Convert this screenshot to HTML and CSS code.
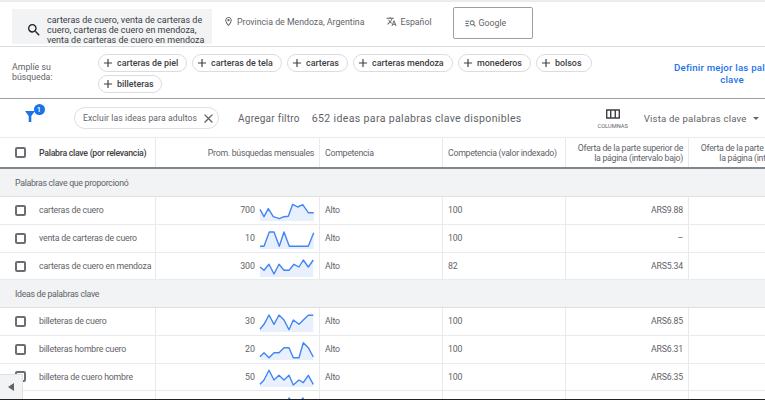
FILE: index.html
```html
<!DOCTYPE html>
<html lang="es">
<head>
<meta charset="utf-8">
<title>Ideas para palabras clave</title>
<link rel="stylesheet" href="styles.css">
</head>
<body>
<div class="page">
  <header class="topbar">
    <div class="search">
      <svg class="ic-search" viewBox="0 0 24 24"><path d="M15.5 14h-.79l-.28-.27A6.471 6.471 0 0 0 16 9.5 6.5 6.5 0 1 0 9.5 16c1.61 0 3.09-.59 4.23-1.57l.27.28v.79l5 4.99L20.49 19l-4.99-5zm-6 0C7.01 14 5 11.99 5 9.5S7.01 5 9.5 5 14 7.01 14 9.5 11.99 14 9.5 14z"/></svg>
      <div class="search-text">carteras de cuero, venta de carteras de cuero, carteras de cuero en mendoza, venta de carteras de cuero en mendoza</div>
    </div>
    <div class="loc">
      <svg class="ic-sm" viewBox="0 0 24 24"><path d="M12 2C8.13 2 5 5.13 5 9c0 5.25 7 13 7 13s7-7.75 7-13c0-3.87-3.13-7-7-7zM7 9c0-2.76 2.24-5 5-5s5 2.24 5 5c0 2.88-2.88 7.19-5 9.88C9.92 16.21 7 11.85 7 9z"/><circle cx="12" cy="9" r="2.5"/></svg>
      <span>Provincia de Mendoza, Argentina</span>
    </div>
    <div class="lang">
      <svg class="ic-sm" viewBox="0 0 24 24"><path d="M12.87 15.07l-2.54-2.51.03-.03c1.74-1.94 2.98-4.17 3.71-6.53H17V4h-7V2H8v2H1v1.99h11.17C11.5 7.92 10.44 9.75 9 11.35 8.07 10.32 7.3 9.19 6.69 8h-2c.73 1.63 1.73 3.17 2.98 4.56l-5.09 5.02L4 19l5-5 3.11 3.11.76-2.04zM18.5 10h-2L12 22h2l1.12-3h4.75L21 22h2l-4.5-12zm-2.62 7l1.62-4.33L19.12 17h-3.24z"/></svg>
      <span>Español</span>
    </div>
    <div class="network">
      <svg class="ic-net" viewBox="0 0 24 24"><path d="M1 6h8v2H1zM1 11h6v2H1zM1 16h8v2H1z"/><path d="M15.5 5a5.5 5.5 0 0 1 4.3 8.9l3.7 3.7-1.4 1.4-3.7-3.7A5.5 5.5 0 1 1 15.5 5zm0 2a3.5 3.5 0 1 0 0 7 3.500 3.500 0 0 0 0-7z"/></svg>
      <span>Google</span>
    </div>
  </header>

  <section class="refine">
    <div class="refine-label">Amplíe su<br>búsqueda:</div>
    <div class="chips">
      <div class="chip w1"><svg class="ic-plus" viewBox="0 0 24 24"><path d="M19 13h-6v6h-2v-6H5v-2h6V5h2v6h6v2z"/></svg>carteras de piel</div>
      <div class="chip w2"><svg class="ic-plus" viewBox="0 0 24 24"><path d="M19 13h-6v6h-2v-6H5v-2h6V5h2v6h6v2z"/></svg>carteras de tela</div>
      <div class="chip w3"><svg class="ic-plus" viewBox="0 0 24 24"><path d="M19 13h-6v6h-2v-6H5v-2h6V5h2v6h6v2z"/></svg>carteras</div>
      <div class="chip w4"><svg class="ic-plus" viewBox="0 0 24 24"><path d="M19 13h-6v6h-2v-6H5v-2h6V5h2v6h6v2z"/></svg>carteras mendoza</div>
      <div class="chip w5"><svg class="ic-plus" viewBox="0 0 24 24"><path d="M19 13h-6v6h-2v-6H5v-2h6V5h2v6h6v2z"/></svg>monederos</div>
      <div class="chip w6"><svg class="ic-plus" viewBox="0 0 24 24"><path d="M19 13h-6v6h-2v-6H5v-2h6V5h2v6h6v2z"/></svg>bolsos</div>
      <div class="chip w7"><svg class="ic-plus" viewBox="0 0 24 24"><path d="M19 13h-6v6h-2v-6H5v-2h6V5h2v6h6v2z"/></svg>billeteras</div>
    </div>
    <div class="refine-link">Definir mejor las palabras clave</div>
  </section>

  <section class="filters">
    <div class="funnel">
      <svg class="ic-funnel" viewBox="0 0 10 11"><path d="M0 0h10L6.300 5V11H3.700V5z"/></svg>
      <span class="badge">1</span>
    </div>
    <div class="filter-chip">
      <span>Excluir las ideas para adultos</span>
      <svg class="ic-close" viewBox="0 0 24 24"><path d="M19 6.410L17.590 5 12 10.590 6.410 5 5 6.410 10.590 12 5 17.590 6.410 19 12 13.410 17.590 19 19 17.590 13.410 12z"/></svg>
    </div>
    <div class="add-filter">Agregar filtro</div>
    <div class="count">652 ideas para palabras clave disponibles</div>
    <div class="columns">
      <svg class="ic-columns" viewBox="0 0 15 10"><path d="M0 0h15v10H0zM1.500 1.500v7h2.800v-7zm4.300 0v7h3.400v-7zm4.900 0v7h2.800v-7z" fill-rule="evenodd"/></svg>
      <span>COLUMNAS</span>
    </div>
    <div class="view">Vista de palabras clave<span class="caret"></span></div>
  </section>

  <main class="table">
    <div class="row head">
      <div class="cell kw"><span class="box"></span><strong>Palabra clave (por relevancia)</strong></div>
      <div class="cell num">Prom. búsquedas mensuales</div>
      <div class="cell">Competencia</div>
      <div class="cell">Competencia (valor indexado)</div>
      <div class="cell right">Oferta de la parte superior de<br>la página (intervalo bajo)</div>
      <div class="cell right">Oferta de la parte superior de<br>la página (intervalo alto)</div>
    </div>

    <div class="group">Palabras clave que proporcionó</div>

    <div class="row">
      <div class="cell kw"><span class="box"></span>carteras de cuero</div>
      <div class="cell vol"><span>700</span><svg class="spark" viewBox="0 0 54 21"><path class="area" d="M0 9.300L4 16.700 8.300 8.700 13.300 16.700 19.300 18.700 24 16.700 28.300 16.300 32.700 4.300 37.700 7 42.700 4.700 48.300 12.700 53.700 12.700V21H0z"/><path class="line" d="M0 9.300L4 16.700 8.300 8.700 13.300 16.700 19.300 18.700 24 16.700 28.300 16.300 32.700 4.300 37.700 7 42.700 4.700 48.300 12.700 53.700 12.700"/></svg></div>
      <div class="cell">Alto</div><div class="cell">100</div><div class="cell right">ARS9.88</div><div class="cell"></div>
    </div>
    <div class="row">
      <div class="cell kw"><span class="box"></span>venta de carteras de cuero</div>
      <div class="cell vol"><span>10</span><svg class="spark" viewBox="0 0 54 21"><path class="area" d="M0 18.300H4L9.300 4H14L19.300 18.300 24 4 29.300 18.300H48.300L53.700 4.700V21H0z"/><path class="line" d="M0 18.300H4L9.300 4H14L19.300 18.300 24 4 29.300 18.300H48.300L53.700 4.700"/></svg></div>
      <div class="cell">Alto</div><div class="cell">100</div><div class="cell right">–</div><div class="cell"></div>
    </div>
    <div class="row">
      <div class="cell kw"><span class="box"></span>carteras de cuero en mendoza</div>
      <div class="cell vol"><span>300</span><svg class="spark" viewBox="0 0 54 21"><path class="area" d="M0 11L4 14.300 9 8.300 14 18 19 8.300 24 14.300 29 14.300 34 8.300 39 11 43.300 4 48.300 11 53.300 4V21H0z"/><path class="line" d="M0 11L4 14.300 9 8.300 14 18 19 8.300 24 14.300 29 14.300 34 8.300 39 11 43.300 4 48.300 11 53.300 4"/></svg></div>
      <div class="cell">Alto</div><div class="cell">82</div><div class="cell right">ARS5.34</div><div class="cell"></div>
    </div>

    <div class="group">Ideas de palabras clave</div>

    <div class="row">
      <div class="cell kw"><span class="box"></span>billeteras de cuero</div>
      <div class="cell vol"><span>30</span><svg class="spark" viewBox="0 0 54 21"><path class="area" d="M0 18.300L4 13.300 9 4 14 13.300 19 4 24 9 29 18.700 33.300 9 39 13.300 43.300 9 48.300 4.300 53.300 4.300V21H0z"/><path class="line" d="M0 18.300L4 13.300 9 4 14 13.300 19 4 24 9 29 18.700 33.300 9 39 13.300 43.300 9 48.300 4.300 53.300 4.300"/></svg></div>
      <div class="cell">Alto</div><div class="cell">100</div><div class="cell right">ARS6.85</div><div class="cell"></div>
    </div>
    <div class="row">
      <div class="cell kw"><span class="box"></span>billeteras hombre cuero</div>
      <div class="cell vol"><span>20</span><svg class="spark" viewBox="0 0 54 21"><path class="area" d="M0 17.700L4 13.700 9 18.700 14 13.700 19 13.700 24 8.700 29 8.700 33.300 18.700 39 18.700 43.300 3.700 48.300 8.700 53.300 18V21H0z"/><path class="line" d="M0 17.700L4 13.700 9 18.700 14 13.700 19 13.700 24 8.700 29 8.700 33.300 18.700 39 18.700 43.300 3.700 48.300 8.700 53.300 18"/></svg></div>
      <div class="cell">Alto</div><div class="cell">100</div><div class="cell right">ARS6.31</div><div class="cell"></div>
    </div>
    <div class="row">
      <div class="cell kw"><span class="box"></span>billetera de cuero hombre</div>
      <div class="cell vol"><span>50</span><svg class="spark" viewBox="0 0 54 21"><path class="area" d="M0 18.300L4 14 9 4.300 14 14 19 9.300 24 14 29 9.300 33.300 19 39 14 43.300 16.700 48.300 9.300 53.300 18.300V21H0z"/><path class="line" d="M0 18.300L4 14 9 4.300 14 14 19 9.300 24 14 29 9.300 33.300 19 39 14 43.300 16.700 48.300 9.300 53.300 18.300"/></svg></div>
      <div class="cell">Alto</div><div class="cell">100</div><div class="cell right">ARS6.35</div><div class="cell"></div>
    </div>
    <div class="row">
      <div class="cell kw"></div>
      <div class="cell vol"><span></span><svg class="spark" viewBox="0 0 54 21"><path class="line" d="M25 12L29 4 33 9 39 9 43 4 47 12"/></svg></div>
      <div class="cell"></div><div class="cell"></div><div class="cell"></div><div class="cell"></div>
    </div>
  </main>
  <div class="pager"><span class="pager-arrow"></span></div>
</div>
</body>
</html>
```
FILE: styles.css
```css
* { box-sizing: border-box; }
html, body { margin: 0; padding: 0; }
body { width: 765px; height: 400px; overflow: hidden; background: #fff; font-family: Roboto, "Liberation Sans", sans-serif; color: #5f6368; }
svg { display: block; flex: none; fill: currentColor; }
.page { position: relative; width: 765px; height: 400px; overflow: hidden; border-top: 2px solid #ececec; border-bottom: 1px solid #222; }

.topbar { display: flex; align-items: flex-start; height: 45px; border-bottom: 1px solid #dadce0; font-size: 8.75px; }
.search { display: flex; align-items: center; flex: none; width: 200px; height: 35px; margin: 7px 0 0 12px; background: #f1f3f4; overflow: hidden; }
.ic-search { width: 16px; height: 16px; margin: 6px 5px 0 14px; color: #202124; }
.search-text { flex: none; width: 160px; padding-top: 6px; font-size: 9px; line-height: 10px; color: #3c4043; }
.loc { display: flex; align-items: center; flex: none; gap: 3px; margin: 14px 0 0 11px; }
.lang { display: flex; align-items: center; flex: none; gap: 3px; margin: 14px 0 0 22px; }
.ic-sm { width: 11px; height: 11px; }
.network { display: flex; align-items: center; flex: none; gap: 3px; width: 80px; height: 32px; margin: 5px 0 0 21px; padding-left: 11px; border: 1px solid #9aa0a6; border-radius: 2px; }
.ic-net { width: 11px; height: 11px; }

.refine { display: flex; height: 52px; border-bottom: 1px solid #9aa0a6; }
.refine-label { flex: none; width: 86px; margin: 15px 0 0 12px; font-size: 8.75px; line-height: 10px; color: #5f6368; }
.chips { display: flex; flex-wrap: wrap; align-content: flex-start; gap: 3px 5px; flex: none; width: 500px; padding-top: 7px; }
.chip { display: flex; align-items: center; height: 18px; padding-left: 2px; border: 1px solid #dadce0; border-radius: 9px; font-size: 8.9px; font-weight: 500; color: #3c4043; white-space: nowrap; }
.ic-plus { width: 14px; height: 14px; margin-right: 2px; color: #3c4043; }
.w1 { width: 89px; } .w2 { width: 90px; } .w3 { width: 61px; } .w4 { width: 100px; } .w5 { width: 73px; } .w6 { width: 56px; } .w7 { width: 64px; }
.refine-link { flex: none; width: 124px; margin: 15px 0 0 72px; font-size: 9.7px; font-weight: 500; line-height: 12px; letter-spacing: .2px; text-align: center; color: #1a73e8; }

.filters { display: flex; align-items: center; height: 38px; }
.funnel { position: relative; flex: none; width: 10px; margin: 0 0 3px 25px; color: #1a73e8; }
.ic-funnel { width: 10px; height: 11px; }
.badge { position: absolute; left: 8.500px; top: -7.500px; width: 11px; height: 11px; border-radius: 50%; background: #1a73e8; color: #fff; font-size: 7.500px; line-height: 11px; text-align: center; font-weight: 500; }
.filter-chip { display: flex; align-items: center; justify-content: space-between; flex: none; width: 145px; height: 22px; margin-left: 39px; padding: 0 2.500px 0 8px; border: 1px solid #e0e0e0; border-radius: 11px; font-size: 8.600px; letter-spacing: .1px; white-space: nowrap; }
.ic-close { width: 15px; height: 15px; }
.add-filter { flex: none; margin-left: 19px; font-size: 10px; letter-spacing: .25px; white-space: nowrap; }
.count { flex: none; margin-left: 12px; font-size: 10.550px; letter-spacing: .35px; white-space: nowrap; }
.columns { display: flex; flex-direction: column; align-items: center; flex: none; width: 40px; margin: 2px 0 0 71px; font-size: 5.700px; gap: 4px; }
.ic-columns { width: 14px; height: 10px; color: #3c4043; }
.view { display: flex; align-items: center; flex: none; margin-left: 11px; font-size: 9.600px; letter-spacing: .2px; white-space: nowrap; }
.caret { width: 0; height: 0; margin-left: 6px; border: 3.500px solid transparent; border-top-color: #5f6368; border-bottom: 0; }

.table { width: 811px; border-top: 1px solid #e8eaed; }
.row { display: grid; grid-template-columns: 156px 164px 123px 123px 123px 122px; height: 28px; border-bottom: 1px solid #e8eaed; font-size: 8.750px; letter-spacing: -.2px; }
.row:nth-child(5) { height: 27px; }
.row:nth-child(8), .row:nth-child(9) { height: 27.500px; }
.row:nth-child(3) .cell, .row:nth-child(4) .cell, .row:nth-child(7) .cell { padding-bottom: 1px; }
.cell { display: flex; align-items: center; padding: 0 5px; border-right: 1px solid #e8eaed; line-height: 10px; white-space: nowrap; min-width: 0; overflow: hidden; }
.row .cell:last-child { border-right: 0; }
.head { height: 31px; border-bottom: 2px solid #80868b; letter-spacing: -.28px; }
.head strong { font-weight: 500; color: #3c4043; }
.kw { padding-left: 15px; gap: 13px; }
.num { justify-content: flex-end; }
.right { justify-content: flex-end; text-align: right; }
.vol { justify-content: flex-end; gap: 5px; padding: 0 5px 0 0; }
.vol span { font-size: 8.800px; letter-spacing: 0; }
.box { flex: none; width: 11px; height: 11px; border: 2px solid #6b6f73; border-radius: 2px; }
.group { display: flex; align-items: center; height: 28px; padding-left: 15px; background: #f1f3f4; border-bottom: 1px solid #e0e0e0; font-size: 8.750px; letter-spacing: -.3px; }
.spark { width: 54px; height: 21px; overflow: visible; }
.area { fill: #e8f0fe; stroke: none; }
.line { fill: none; stroke: #4285f4; stroke-width: 1.400; stroke-linejoin: round; }

.pager { position: absolute; left: 0; bottom: 0; width: 23px; height: 25px; display: flex; align-items: center; justify-content: center; background: #f1f3f4; border: 1px solid #e0e0e0; border-left: 0; border-bottom: 0; }
.pager-arrow { width: 0; height: 0; border: 4px solid transparent; border-right: 6px solid #5f6368; border-left: 0; }
```
